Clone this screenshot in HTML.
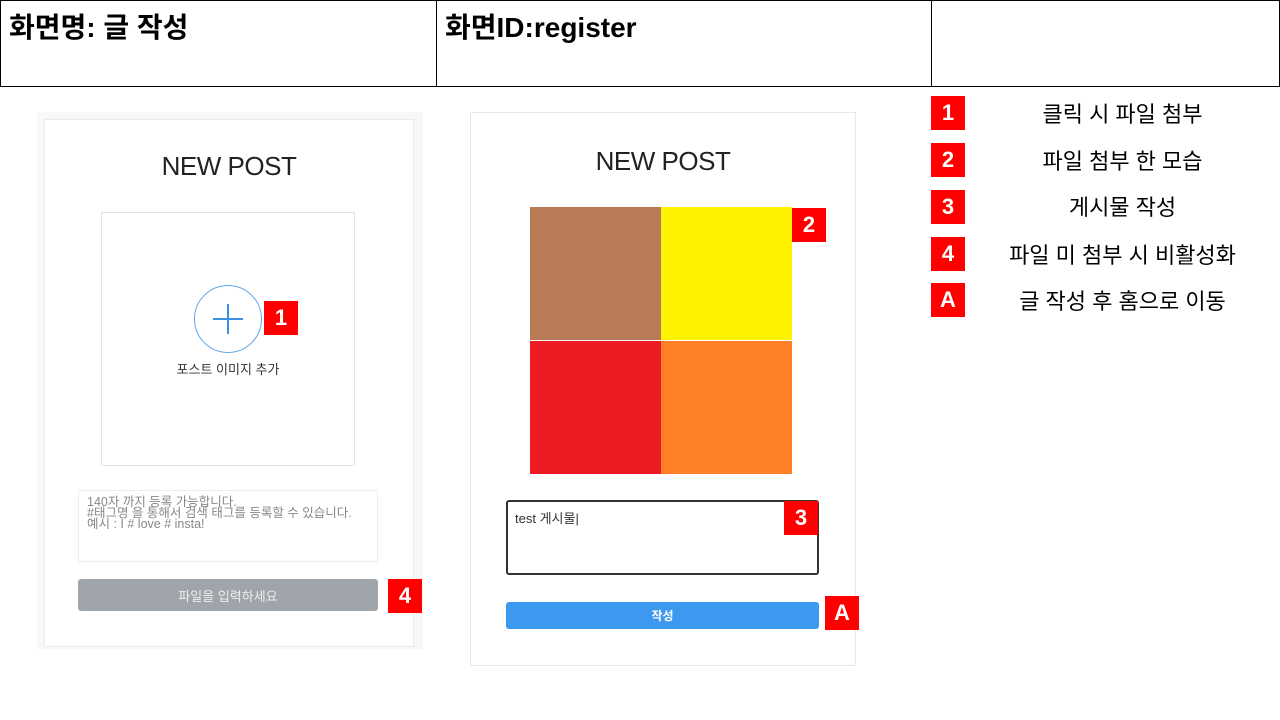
<!DOCTYPE html><html><head><meta charset="utf-8"><style>
*{margin:0;padding:0;box-sizing:border-box}
body{width:1280px;height:720px;background:#fff;position:relative;overflow:hidden;font-family:"Liberation Sans","Noto Sans CJK KR",sans-serif}
.a{position:absolute}
.hd{font-weight:bold;font-size:28px;color:#000;top:6px}
.b{position:absolute;background:#f00;color:#fff;font-weight:bold;font-size:22px;display:flex;align-items:center;justify-content:center;width:34px;height:34px}
.lt{position:absolute;left:975px;width:295px;text-align:center;font-size:22px;color:#000}
.np{position:absolute;font-size:26px;color:#222;text-align:center;letter-spacing:-.5px}
</style></head><body>
<div class="a" style="left:0;top:0;width:1280px;height:87px;border:1px solid #000"></div>
<div class="a" style="left:436px;top:0;width:1px;height:87px;background:#000"></div>
<div class="a" style="left:931px;top:0;width:1px;height:87px;background:#000"></div>
<div class="a hd" style="left:9px">화면명: 글 작성</div>
<div class="a hd" style="left:445px">화면ID:register</div>

<div class="b" style="left:931px;top:96px">1</div><div class="lt" style="top:97px">클릭 시 파일 첨부</div>
<div class="b" style="left:931px;top:143px">2</div><div class="lt" style="top:144px">파일 첨부 한 모습</div>
<div class="b" style="left:931px;top:190px">3</div><div class="lt" style="top:190px">게시물 작성</div>
<div class="b" style="left:931px;top:237px">4</div><div class="lt" style="top:238px">파일 미 첨부 시 비활성화</div>
<div class="b" style="left:931px;top:283px">A</div><div class="lt" style="top:284px">글 작성 후 홈으로 이동</div>

<div class="a" style="left:37px;top:112px;width:386px;height:537px;background:#f8f8f8"></div>
<div class="a" style="left:44px;top:119px;width:370px;height:528px;background:#fff;border:1px solid #ebebeb"></div>
<div class="np" style="left:44px;width:370px;top:151px">NEW POST</div>
<div class="a" style="left:101px;top:212px;width:254px;height:254px;border:1px solid #e4e4e4"></div>
<div class="a" style="left:194px;top:285px;width:68px;height:68px;border:1.3px solid #5aa5e8;border-radius:50%"></div>
<div class="a" style="left:213px;top:318px;width:30px;height:2px;background:#3a8fe0"></div>
<div class="a" style="left:227px;top:304px;width:2px;height:30px;background:#3a8fe0"></div>
<div class="b" style="left:264px;top:301px">1</div>
<div class="a" style="left:101px;width:254px;text-align:center;top:359px;font-size:13px;color:#333">포스트 이미지 추가</div>
<div class="a" style="left:78px;top:490px;width:300px;height:72px;border:1px solid #eee;font-size:12.5px;line-height:11px;color:#888;padding:6px 8px">140자 까지 등록 가능합니다.<br>#태그명 을 통해서 검색 태그를 등록할 수 있습니다.<br>예시 : I # love # insta!</div>
<div class="a" style="left:78px;top:579px;width:300px;height:32px;background:#a0a5ab;border-radius:3px;color:#eee;font-size:13px;display:flex;align-items:center;justify-content:center">파일을 입력하세요</div>
<div class="b" style="left:388px;top:579px">4</div>

<div class="a" style="left:470px;top:112px;width:386px;height:554px;background:#fff;border:1px solid #e8e8e8"></div>
<div class="np" style="left:470px;width:386px;top:146px">NEW POST</div>
<div class="a" style="left:530px;top:207px;width:131px;height:133px;background:#b97a57"></div>
<div class="a" style="left:661px;top:207px;width:131px;height:133px;background:#fff200"></div>
<div class="a" style="left:530px;top:341px;width:131px;height:133px;background:#ed1c24"></div>
<div class="a" style="left:661px;top:341px;width:131px;height:133px;background:#ff7f27"></div>
<div class="b" style="left:792px;top:208px">2</div>
<div class="a" style="left:506px;top:500px;width:313px;height:75px;border:2px solid #333;border-radius:3px;font-size:13px;color:#333;padding:6px 7px">test 게시물|</div>
<div class="b" style="left:784px;top:501px">3</div>
<div class="a" style="left:506px;top:602px;width:313px;height:27px;background:#3c99ef;border-radius:3px;color:#fff;font-weight:bold;font-size:12px;display:flex;align-items:center;justify-content:center">작성</div>
<div class="b" style="left:825px;top:596px">A</div>
</body></html>
